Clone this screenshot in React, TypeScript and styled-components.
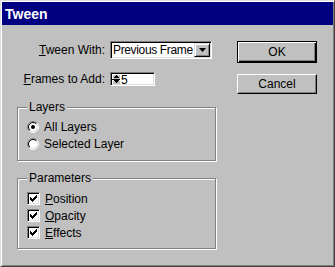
import React, { useId } from 'react';
import styled, { createGlobalStyle } from 'styled-components';

const GlobalStyle = createGlobalStyle`
  html, body {
    margin: 0;
    padding: 0;
    background: #c0c0c0;
  }
  body {
    font-family: "Liberation Sans", Arial, sans-serif;
    font-size: 12px;
    color: #000;
  }
`;

const Window = styled.div`
  box-sizing: border-box;
  width: 335px;
  height: 267px;
  padding: 1px;
  background: #c0c0c0;
  border-top: 1px solid #dfdfdf;
  border-left: 1px solid #dfdfdf;
  border-right: 1px solid #404040;
  border-bottom: 1px solid #404040;
  box-shadow: inset 1px 1px 0 #fff, inset -1px -1px 0 #808080;
  display: flex;
  flex-direction: column;
`;

const TitleBar = styled.div`
  height: 23px;
  flex: none;
  display: flex;
  align-items: center;
  padding-left: 3px;
  background: #000080;
  color: #fff;
  font-size: 14px;
  font-weight: bold;
`;

const Body = styled.div`
  display: flex;
  gap: 20px;
  padding: 16px 0 0 15px;
`;

const LeftColumn = styled.div`
  width: 200px;
  display: flex;
  flex-direction: column;
`;

const FieldGrid = styled.div`
  display: grid;
  grid-template-columns: 88px 102px;
  grid-template-rows: 18px 14px;
  column-gap: 5px;
  row-gap: 13px;
  align-items: center;
`;

const FieldLabel = styled.div`
  text-align: right;
  line-height: 14px;
  white-space: nowrap;
`;

const Accel = styled.span`
  text-decoration: underline;
`;

const Sunken = styled.div`
  box-sizing: border-box;
  background: #fff;
  border: 1px solid;
  border-color: #808080 #fff #fff #808080;
  box-shadow: inset 1px 1px 0 #000, inset -1px -1px 0 #dfdfdf;
`;

const Select = styled(Sunken)`
  width: 102px;
  height: 18px;
  display: flex;
  align-items: stretch;
  padding: 1px;
`;

const SelectValue = styled.div`
  flex: 1;
  min-width: 0;
  white-space: nowrap;
  line-height: 14px;
  padding-left: 1px;
  letter-spacing: -0.35px;
`;

const RaisedButton = styled.div<{ $w: number }>`
  box-sizing: border-box;
  width: ${p => p.$w}px;
  flex: none;
  display: flex;
  align-items: center;
  justify-content: center;
  background: #c0c0c0;
  border: 1px solid;
  border-color: #dfdfdf #000 #000 #dfdfdf;
  box-shadow: inset 1px 1px 0 #fff, inset -1px -1px 0 #808080;
`;

const Spinner = styled(Sunken)`
  width: 45px;
  height: 14px;
  display: flex;
  align-items: stretch;
  padding: 1px;
`;

const SpinArrows = styled.div`
  display: flex;
  flex-direction: column;
  width: 8px;
  background: #000;
  gap: 1px;
`;

const SpinHalf = styled(RaisedButton)`
  flex: 1;
  border-width: 0;
  box-shadow: inset 1px 1px 0 #fff;
`;

const SpinValue = styled.div`
  line-height: 12px;
  padding-left: 1px;
`;

const Group = styled.div<{ $gap: number; $top: number; $bottom: number }>`
  position: relative;
  box-sizing: border-box;
  width: 199px;
  margin-top: ${p => p.$gap}px;
  padding: ${p => p.$top}px 0 ${p => p.$bottom}px 9px;
  border: 1px solid #808080;
  box-shadow: inset 1px 1px 0 #fff, 1px 1px 0 #fff;
`;

const Legend = styled.div`
  position: absolute;
  top: -8px;
  left: 9px;
  padding: 0 2px;
  line-height: 14px;
  background: #c0c0c0;
`;

const OptionRow = styled.div`
  height: 17px;
  display: flex;
  align-items: center;
  gap: 5px;
  line-height: 14px;
`;

const CheckBox = styled(Sunken)`
  width: 13px;
  height: 13px;
  display: flex;
  align-items: center;
  justify-content: center;
`;

const ButtonColumn = styled.div`
  display: flex;
  flex-direction: column;
  gap: 11px;
`;

const DialogButton = styled.div<{ $default?: boolean }>`
  box-sizing: border-box;
  width: 80px;
  height: ${p => (p.$default ? 22 : 20)}px;
  display: flex;
  align-items: center;
  justify-content: center;
  background: #c0c0c0;
  border: 1px solid;
  border-color: ${p => (p.$default ? '#000' : '#fff #000 #000 #fff')};
  box-shadow: ${p =>
    p.$default
      ? 'inset 1px 1px 0 #fff, inset -1px -1px 0 #000, inset -2px -2px 0 #808080'
      : 'inset -1px -1px 0 #808080'};
  font-size: 12px;
`;

const Radio: React.FC<{ checked?: boolean }> = ({ checked }) => {
  const id = useId().replace(/:/g, '');
  return (
    <svg width="12" height="12" viewBox="0 0 12 12">
      <defs>
        <linearGradient id={`o${id}`} x1="0" y1="0" x2="1" y2="1">
          <stop offset="0.5" stopColor="#808080" />
          <stop offset="0.5" stopColor="#fff" />
        </linearGradient>
        <linearGradient id={`i${id}`} x1="0" y1="0" x2="1" y2="1">
          <stop offset="0.5" stopColor="#000" />
          <stop offset="0.5" stopColor="#dfdfdf" />
        </linearGradient>
      </defs>
      <circle cx="6" cy="6" r="5.5" fill="none" stroke={`url(#o${id})`} />
      <circle cx="6" cy="6" r="4.5" fill="#fff" stroke={`url(#i${id})`} />
      {checked && <circle cx="6" cy="6" r="2" fill="#000" />}
    </svg>
  );
};

const Check: React.FC = () => (
  <CheckBox>
    <svg width="7" height="7" viewBox="0 0 7 7" shapeRendering="crispEdges">
      <path d="M6 0h1v3h-1v1h-1v1h-1v1h-1v1h-1v-1h-1v-1h-1v-3h1v1h1v1h1v-1h1v-1h1z" fill="#000" />
    </svg>
  </CheckBox>
);

const DownArrow: React.FC = () => (
  <svg width="7" height="4" viewBox="0 0 7 4">
    <path d="M0 0h7L3.5 4z" fill="#000" />
  </svg>
);

const TinyArrow: React.FC<{ up?: boolean }> = ({ up }) => (
  <svg width="5" height="3" viewBox="0 0 5 3" shapeRendering="crispEdges">
    <path d={up ? 'M2 0h1v1h1v1h1v1H0V2h1V1h1z' : 'M0 0h5v1H4v1H3v1H2V2H1V1H0z'} fill="#000" />
  </svg>
);

const App: React.FC = () => (
  <>
    <GlobalStyle />
    <Window>
      <TitleBar>Tween</TitleBar>
      <Body>
        <LeftColumn>
          <FieldGrid>
            <FieldLabel>
              <Accel>T</Accel>ween With:
            </FieldLabel>
            <Select>
              <SelectValue>Previous Frame</SelectValue>
              <RaisedButton $w={16}>
                <DownArrow />
              </RaisedButton>
            </Select>
            <FieldLabel>
              <Accel>F</Accel>rames to Add:
            </FieldLabel>
            <Spinner>
              <SpinArrows>
                <SpinHalf $w={8}>
                  <TinyArrow up />
                </SpinHalf>
                <SpinHalf $w={8}>
                  <TinyArrow />
                </SpinHalf>
              </SpinArrows>
              <SpinValue>5</SpinValue>
            </Spinner>
          </FieldGrid>

          <Group $gap={21} $top={10} $bottom={8}>
            <Legend>Layers</Legend>
            <OptionRow>
              <Radio checked />
              All Layers
            </OptionRow>
            <OptionRow>
              <Radio />
              Selected Layer
            </OptionRow>
          </Group>

          <Group $gap={17} $top={11} $bottom={7}>
            <Legend>Parameters</Legend>
            <OptionRow>
              <Check />
              <span>
                <Accel>P</Accel>osition
              </span>
            </OptionRow>
            <OptionRow>
              <Check />
              <span>
                <Accel>O</Accel>pacity
              </span>
            </OptionRow>
            <OptionRow>
              <Check />
              <span>
                <Accel>E</Accel>ffects
              </span>
            </OptionRow>
          </Group>
        </LeftColumn>

        <ButtonColumn>
          <DialogButton $default>OK</DialogButton>
          <DialogButton>Cancel</DialogButton>
        </ButtonColumn>
      </Body>
    </Window>
  </>
);

export default App;
